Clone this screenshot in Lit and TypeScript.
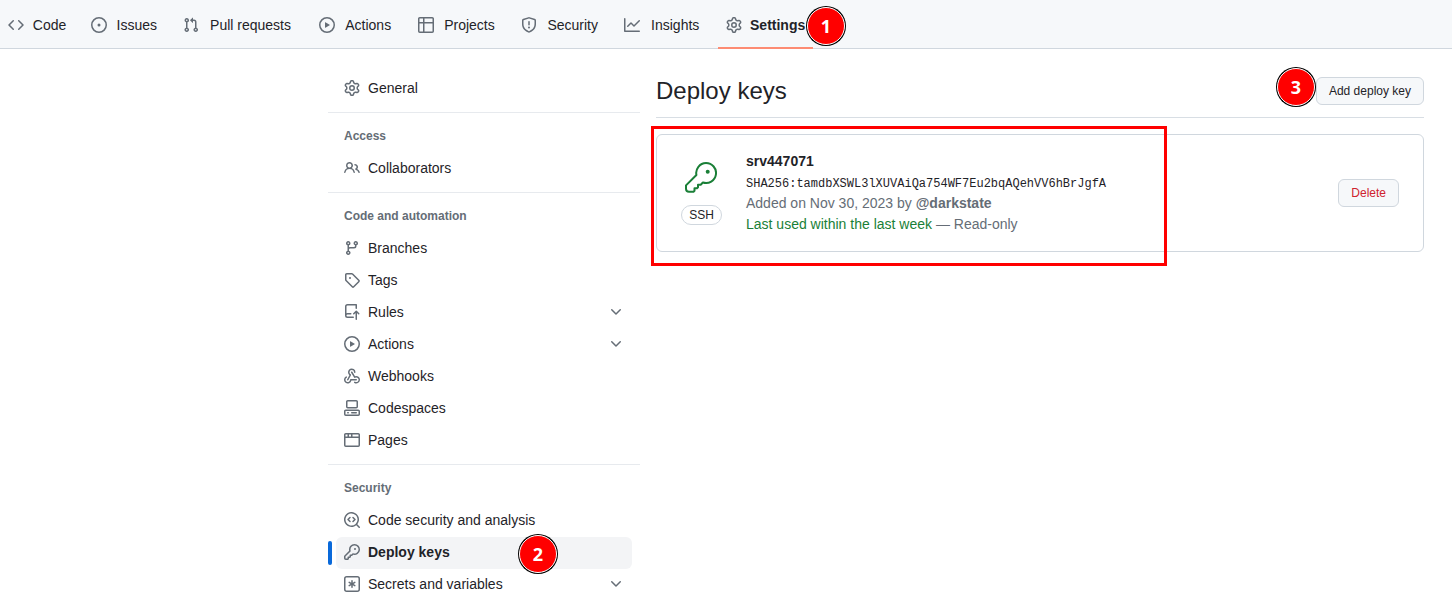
import { css, html, LitElement, nothing, svg } from "lit";
import { customElement } from "lit/decorators.js";

const icons: Record<string, string[]> = {
  code: ["m11.28 3.22 4.25 4.25a.75.75 0 0 1 0 1.06l-4.25 4.25a.749.749 0 0 1-1.275-.326.749.749 0 0 1 .215-.734L13.94 8l-3.72-3.72a.749.749 0 0 1 .326-1.275.749.749 0 0 1 .734.215Zm-6.56 0a.751.751 0 0 1 1.042.018.751.751 0 0 1 .018 1.042L2.06 8l3.72 3.72a.749.749 0 0 1-.326 1.275.749.749 0 0 1-.734-.215L.47 8.53a.75.75 0 0 1 0-1.06Z"],
  issue: ["M8 9.5a1.5 1.5 0 1 0 0-3 1.5 1.5 0 0 0 0 3Z", "M8 0a8 8 0 1 1 0 16A8 8 0 0 1 8 0ZM1.5 8a6.5 6.5 0 1 0 13 0 6.5 6.5 0 0 0-13 0Z"],
  pull: ["M1.5 3.25a2.25 2.25 0 1 1 3 2.122v5.256a2.251 2.251 0 1 1-1.5 0V5.372A2.25 2.25 0 0 1 1.5 3.25Zm5.677-.177L9.573.677A.25.25 0 0 1 10 .854V2.5h1A2.5 2.5 0 0 1 13.5 5v5.628a2.251 2.251 0 1 1-1.5 0V5a1 1 0 0 0-1-1h-1v1.646a.25.25 0 0 1-.427.177L7.177 3.427a.25.25 0 0 1 0-.354ZM3.75 2.5a.75.75 0 1 0 0 1.5.75.75 0 0 0 0-1.5Zm0 9.5a.75.75 0 1 0 0 1.5.75.75 0 0 0 0-1.5Zm8.25.75a.75.75 0 1 0 1.5 0 .75.75 0 0 0-1.5 0Z"],
  play: ["M8 0a8 8 0 1 1 0 16A8 8 0 0 1 8 0ZM1.5 8a6.5 6.5 0 1 0 13 0 6.5 6.5 0 0 0-13 0Zm4.879-2.773 4.264 2.559a.25.25 0 0 1 0 .428l-4.264 2.559A.25.25 0 0 1 6 10.559V5.442a.25.25 0 0 1 .379-.215Z"],
  table: ["M0 1.75C0 .784.784 0 1.75 0h12.5C15.216 0 16 .784 16 1.75v12.5A1.75 1.75 0 0 1 14.25 16H1.75A1.75 1.75 0 0 1 0 14.25ZM6.5 6.5v8h7.75a.25.25 0 0 0 .25-.25V6.5Zm8-1.5V1.75a.25.25 0 0 0-.25-.25H6.5V5Zm-13 1.5v7.75c0 .138.112.25.25.25H5v-8ZM5 5V1.5H1.75a.25.25 0 0 0-.25.25V5Z"],
  shield: ["M7.467.133a1.748 1.748 0 0 1 1.066 0l5.25 1.68A1.75 1.75 0 0 1 15 3.48V7c0 1.566-.32 3.182-1.303 4.682-.983 1.498-2.585 2.813-5.032 3.855a1.697 1.697 0 0 1-1.33 0c-2.447-1.042-4.049-2.357-5.032-3.855C1.32 10.182 1 8.566 1 7V3.48a1.75 1.75 0 0 1 1.217-1.667Zm.61 1.429a.25.25 0 0 0-.153 0l-5.25 1.68a.25.25 0 0 0-.174.238V7c0 1.358.275 2.666 1.057 3.86.784 1.194 2.121 2.34 4.366 3.297a.196.196 0 0 0 .154 0c2.245-.956 3.582-2.104 4.366-3.298C13.225 9.666 13.5 8.36 13.5 7V3.48a.251.251 0 0 0-.174-.237l-5.25-1.68ZM8.75 4.75v3a.75.75 0 0 1-1.5 0v-3a.75.75 0 0 1 1.5 0ZM9 10.5a1 1 0 1 1-2 0 1 1 0 0 1 2 0Z"],
  graph: ["M1.5 1.75V13.5h13.75a.75.75 0 0 1 0 1.5H.75a.75.75 0 0 1-.75-.75V1.75a.75.75 0 0 1 1.5 0Zm14.28 2.53-5.25 5.25a.75.75 0 0 1-1.06 0L7 7.06 4.28 9.78a.751.751 0 0 1-1.042-.018.751.751 0 0 1-.018-1.042l3.25-3.25a.75.75 0 0 1 1.06 0L10 7.94l4.72-4.72a.751.751 0 0 1 1.042.018.751.751 0 0 1 .018 1.042Z"],
  gear: ["M8 0a8.2 8.2 0 0 1 .701.031C9.444.095 9.99.645 10.16 1.29l.288 1.107c.018.066.079.158.212.224.231.114.454.243.668.386.123.082.233.09.299.071l1.103-.303c.644-.176 1.392.021 1.82.63.27.385.506.792.704 1.218.315.675.111 1.422-.364 1.891l-.814.806c-.049.048-.098.147-.088.294.016.257.016.515 0 .772-.01.147.038.246.088.294l.814.806c.475.469.679 1.216.364 1.891a7.977 7.977 0 0 1-.704 1.217c-.428.61-1.176.807-1.82.63l-1.102-.302c-.067-.019-.177-.011-.3.071a5.909 5.909 0 0 1-.668.386c-.133.066-.194.158-.211.224l-.29 1.106c-.168.646-.715 1.196-1.458 1.26a8.006 8.006 0 0 1-1.402 0c-.743-.064-1.289-.614-1.458-1.26l-.289-1.106c-.018-.066-.079-.158-.212-.224a5.738 5.738 0 0 1-.668-.386c-.123-.082-.233-.09-.299-.071l-1.103.303c-.644.176-1.392-.021-1.82-.63a8.12 8.12 0 0 1-.704-1.218c-.315-.675-.111-1.422.363-1.891l.815-.806c.05-.048.098-.147.088-.294a6.214 6.214 0 0 1 0-.772c.01-.147-.038-.246-.088-.294l-.815-.806C.635 6.045.431 5.298.746 4.623a7.92 7.92 0 0 1 .704-1.217c.428-.61 1.176-.807 1.82-.63l1.102.302c.067.019.177.011.3-.071.214-.143.437-.272.668-.386.133-.066.194-.158.211-.224l.29-1.106C6.009.645 6.556.095 7.299.03 7.53.01 7.764 0 8 0Zm-.571 1.525c-.036.003-.108.036-.137.146l-.289 1.105c-.147.561-.549.967-.998 1.189-.173.086-.34.183-.5.29-.417.278-.97.423-1.529.27l-1.103-.303c-.109-.03-.175.016-.195.045-.22.312-.412.644-.573.99-.014.031-.021.11.059.19l.815.806c.411.406.562.957.53 1.456a4.709 4.709 0 0 0 0 .582c.032.499-.119 1.05-.53 1.456l-.815.806c-.081.08-.073.159-.059.19.162.346.353.677.573.989.02.03.085.076.195.046l1.102-.303c.56-.153 1.113-.008 1.53.27.161.107.328.204.501.29.447.222.85.629.997 1.189l.289 1.105c.029.109.101.143.137.146a6.6 6.6 0 0 0 1.142 0c.036-.003.108-.036.137-.146l.289-1.105c.147-.561.549-.967.998-1.189.173-.086.34-.183.5-.29.417-.278.97-.423 1.529-.27l1.103.303c.109.029.175-.016.195-.045.22-.313.411-.644.573-.99.014-.031.021-.11-.059-.19l-.815-.806c-.411-.406-.562-.957-.53-1.456a4.709 4.709 0 0 0 0-.582c-.032-.499.119-1.05.53-1.456l.815-.806c.081-.08.073-.159.059-.19a6.464 6.464 0 0 0-.573-.989c-.02-.03-.085-.076-.195-.046l-1.102.303c-.56.153-1.113.008-1.53-.27a4.44 4.44 0 0 0-.501-.29c-.447-.222-.85-.629-.997-1.189l-.289-1.105c-.029-.11-.101-.143-.137-.146a6.6 6.6 0 0 0-1.142 0ZM11 8a3 3 0 1 1-6 0 3 3 0 0 1 6 0ZM9.5 8a1.5 1.5 0 1 0-3.001.001A1.5 1.5 0 0 0 9.5 8Z"],
  people: ["M2 5.5a3.5 3.5 0 1 1 5.898 2.549 5.508 5.508 0 0 1 3.034 4.084.75.75 0 1 1-1.482.235 4 4 0 0 0-7.9 0 .75.75 0 0 1-1.482-.236A5.507 5.507 0 0 1 3.102 8.05 3.493 3.493 0 0 1 2 5.5ZM11 4a3.001 3.001 0 0 1 2.22 5.018 5.01 5.01 0 0 1 2.56 3.012.749.749 0 0 1-.885.954.752.752 0 0 1-.549-.514 3.507 3.507 0 0 0-2.522-2.372.75.75 0 0 1-.574-.73v-.352a.75.75 0 0 1 .416-.672A1.5 1.5 0 0 0 11 5.5.75.75 0 0 1 11 4Zm-5.5-.5a2 2 0 1 0-.001 3.999A2 2 0 0 0 5.5 3.5Z"],
  branch: ["M9.5 3.25a2.25 2.25 0 1 1 3 2.122V6A2.5 2.5 0 0 1 10 8.5H6a1 1 0 0 0-1 1v1.128a2.251 2.251 0 1 1-1.5 0V5.372a2.25 2.25 0 1 1 1.5 0v1.836A2.493 2.493 0 0 1 6 7h4a1 1 0 0 0 1-1v-.628A2.25 2.25 0 0 1 9.5 3.25Zm-6 0a.75.75 0 1 0 1.5 0 .75.75 0 0 0-1.5 0Zm8.25-.75a.75.75 0 1 0 0 1.5.75.75 0 0 0 0-1.5ZM4.25 12a.75.75 0 1 0 0 1.5.75.75 0 0 0 0-1.5Z"],
  tag: ["M1 7.775V2.75C1 1.784 1.784 1 2.75 1h5.025c.464 0 .91.184 1.238.513l6.25 6.25a1.75 1.75 0 0 1 0 2.474l-5.026 5.026a1.75 1.75 0 0 1-2.474 0l-6.25-6.25A1.752 1.752 0 0 1 1 7.775Zm1.5 0c0 .066.026.13.073.177l6.25 6.25a.25.25 0 0 0 .354 0l5.025-5.025a.25.25 0 0 0 0-.354l-6.25-6.25a.25.25 0 0 0-.177-.073H2.75a.25.25 0 0 0-.25.25ZM6 5a1 1 0 1 1 0 2 1 1 0 0 1 0-2Z"],
  rules: ["M1 2.5A2.5 2.5 0 0 1 3.5 0h8.75a.75.75 0 0 1 .75.75v3.5a.75.75 0 0 1-1.5 0V1.5h-8a1 1 0 0 0-1 1v6.708A2.493 2.493 0 0 1 3.5 9h3.25a.75.75 0 0 1 0 1.5H3.5a1 1 0 0 0 0 2h5.75a.75.75 0 0 1 0 1.5H3.5A2.5 2.5 0 0 1 1 11.5Zm13.23 7.79h-.001l-1.224-1.224v6.184a.75.75 0 0 1-1.5 0V9.066L10.28 10.29a.75.75 0 0 1-1.06-1.061l2.505-2.504a.75.75 0 0 1 1.06 0L15.29 9.23a.751.751 0 0 1-.018 1.042.751.751 0 0 1-1.042.018Z"],
  webhook: [
    "M5.5 4.25a2.25 2.25 0 0 1 4.5 0 .75.75 0 0 0 1.5 0 3.75 3.75 0 1 0-6.14 2.889l-2.272 4.258a.75.75 0 0 0 1.324.706L7 7.25a.75.75 0 0 0-.309-1.015A2.25 2.25 0 0 1 5.5 4.25Z",
    "M7.364 3.607a.75.75 0 0 1 1.03.257l2.608 4.349a3.75 3.75 0 1 1-.628 6.785.75.75 0 0 1 .752-1.299 2.25 2.25 0 1 0-.033-3.88.75.75 0 0 1-1.03-.256L7.107 4.636a.75.75 0 0 1 .257-1.03Z",
    "M2.9 8.776A.75.75 0 0 1 2.625 9.8 2.25 2.25 0 1 0 6 11.75a.75.75 0 0 1 .75-.751h5.5a.75.75 0 0 1 0 1.5H7.425a3.751 3.751 0 1 1-5.55-3.998.75.75 0 0 1 1.024.274Z",
  ],
  codespaces: [
    "M0 11.25c0-.966.784-1.75 1.75-1.75h12.5c.966 0 1.75.784 1.75 1.75v3A1.75 1.75 0 0 1 14.25 16H1.75A1.75 1.75 0 0 1 0 14.25Zm2-9.5C2 .784 2.784 0 3.75 0h8.5C13.216 0 14 .784 14 1.75v5a1.75 1.75 0 0 1-1.75 1.75h-8.5A1.75 1.75 0 0 1 2 6.75Zm1.75-.25a.25.25 0 0 0-.25.25v5c0 .138.112.25.25.25h8.5a.25.25 0 0 0 .25-.25v-5a.25.25 0 0 0-.25-.25Zm-2 9.5a.25.25 0 0 0-.25.25v3c0 .138.112.25.25.25h12.5a.25.25 0 0 0 .25-.25v-3a.25.25 0 0 0-.25-.25Z",
    "M7 12.75a.75.75 0 0 1 .75-.75h4.5a.75.75 0 0 1 0 1.5h-4.5a.75.75 0 0 1-.75-.75Zm-4 0a.75.75 0 0 1 .75-.75h.5a.75.75 0 0 1 0 1.5h-.5a.75.75 0 0 1-.75-.75Z",
  ],
  browser: ["M0 2.75C0 1.784.784 1 1.75 1h12.5c.966 0 1.75.784 1.75 1.75v10.5A1.75 1.75 0 0 1 14.25 15H1.75A1.75 1.75 0 0 1 0 13.25ZM14.5 6h-13v7.25c0 .138.112.25.25.25h12.5a.25.25 0 0 0 .25-.25Zm-6-3.5v2h6V2.75a.25.25 0 0 0-.25-.25ZM5 2.5v2h2v-2Zm-3.25 0a.25.25 0 0 0-.25.25V4.5h2v-2Z"],
  codescan: [
    "M8.47 4.97a.75.75 0 0 0 0 1.06L9.94 7.5 8.47 8.97a.75.75 0 1 0 1.06 1.06l2-2a.75.75 0 0 0 0-1.06l-2-2a.75.75 0 0 0-1.06 0ZM6.53 6.03a.75.75 0 0 0-1.06-1.06l-2 2a.75.75 0 0 0 0 1.06l2 2a.75.75 0 1 0 1.06-1.06L5.06 7.5l1.47-1.47Z",
    "M12.246 13.307a7.501 7.501 0 1 1 1.06-1.06l2.474 2.473a.749.749 0 0 1-.326 1.275.749.749 0 0 1-.734-.215ZM1.5 7.5a6.002 6.002 0 0 0 3.608 5.504 6.002 6.002 0 0 0 6.486-1.117.75.75 0 0 1 .292-.293A6 6 0 1 0 1.5 7.5Z",
  ],
  key: ["M10.5 0a5.499 5.499 0 1 1-1.288 10.848l-.932.932a.749.749 0 0 1-.53.22H7v.75a.749.749 0 0 1-.22.53l-.5.5a.749.749 0 0 1-.53.22H5v.75a.749.749 0 0 1-.22.53l-.5.5a.749.749 0 0 1-.53.22h-2A1.75 1.75 0 0 1 0 14.25v-2c0-.199.079-.389.22-.53l4.932-4.932A5.5 5.5 0 0 1 10.5 0Zm-4 5.5c-.001.431.069.86.205 1.269a.75.75 0 0 1-.181.768L1.5 12.56v1.69c0 .138.112.25.25.25h1.69l.06-.06v-1.19a.75.75 0 0 1 .75-.75h1.19l.06-.06v-1.19a.75.75 0 0 1 .75-.75h1.19l1.023-1.025a.75.75 0 0 1 .768-.18A4 4 0 1 0 6.5 5.5ZM11 6a1 1 0 1 1 0-2 1 1 0 0 1 0 2Z"],
  asterisk: [
    "M0 2.75A2.75 2.75 0 0 1 2.75 0h10.5A2.75 2.75 0 0 1 16 2.75v10.5A2.75 2.75 0 0 1 13.25 16H2.75A2.75 2.75 0 0 1 0 13.25ZM2.75 1.5c-.69 0-1.25.56-1.25 1.25v10.5c0 .69.56 1.25 1.25 1.25h10.5c.69 0 1.25-.56 1.25-1.25V2.75c0-.69-.56-1.25-1.25-1.25Z",
    "M8 4a.75.75 0 0 1 .75.75V6.7l1.69-.975a.75.75 0 0 1 .75 1.3L9.5 8l1.69.976a.75.75 0 0 1-.75 1.298L8.75 9.3v1.951a.75.75 0 0 1-1.5 0V9.299l-1.69.976a.75.75 0 0 1-.75-1.3L6.5 8l-1.69-.975a.75.75 0 0 1 .75-1.3l1.69.976V4.75A.75.75 0 0 1 8 4Z",
  ],
  chevron: ["M12.78 5.22a.749.749 0 0 1 0 1.06l-4.25 4.25a.75.75 0 0 1-1.06 0L3.22 6.28a.749.749 0 1 1 1.06-1.06L8 8.939l3.72-3.719a.749.749 0 0 1 1.06 0Z"],
};

const icon = (name: string) => html`
  <svg class="icon" viewBox="0 0 16 16" width="16" height="16" fill="currentColor">
    ${icons[name].map((d) => svg`<path d=${d}></path>`)}
  </svg>
`;

const tabs = [
  { icon: "code", label: "Code" },
  { icon: "issue", label: "Issues" },
  { icon: "pull", label: "Pull requests" },
  { icon: "play", label: "Actions" },
  { icon: "table", label: "Projects" },
  { icon: "shield", label: "Security" },
  { icon: "graph", label: "Insights" },
  { icon: "gear", label: "Settings", active: true },
];

type NavItem = { icon: string; label: string; chevron?: boolean; active?: boolean };
type NavGroup = { heading?: string; items: NavItem[] };

const groups: NavGroup[] = [
  { items: [{ icon: "gear", label: "General" }] },
  { heading: "Access", items: [{ icon: "people", label: "Collaborators" }] },
  {
    heading: "Code and automation",
    items: [
      { icon: "branch", label: "Branches" },
      { icon: "tag", label: "Tags" },
      { icon: "rules", label: "Rules", chevron: true },
      { icon: "play", label: "Actions", chevron: true },
      { icon: "webhook", label: "Webhooks" },
      { icon: "codespaces", label: "Codespaces" },
      { icon: "browser", label: "Pages" },
    ],
  },
  {
    heading: "Security",
    items: [
      { icon: "codescan", label: "Code security and analysis" },
      { icon: "key", label: "Deploy keys", active: true },
      { icon: "asterisk", label: "Secrets and variables", chevron: true },
    ],
  },
];

// numbered callouts painted over the screenshot
const callouts = [
  { n: 1, x: 826, y: 26 },
  { n: 2, x: 538, y: 554 },
  { n: 3, x: 1296, y: 87 },
];

@customElement("app-root")
export class AppRoot extends LitElement {
  static override styles = css`
    :host {
      display: block;
      position: relative;
      height: 605px;
      overflow: hidden;
      background: #ffffff;
      color: #1f2328;
      font-family: "Liberation Sans", Arial, sans-serif;
      font-size: 14px;
      line-height: 21px;
    }

    .icon {
      display: block;
      flex: none;
      color: #656d76;
    }

    .tabs {
      display: flex;
      gap: 8px;
      height: 48px;
      background: #f6f8fa;
      border-bottom: 1px solid #d0d7de;
    }

    .tab {
      position: relative;
      display: flex;
      align-items: center;
      gap: 8px;
      height: 48px;
      padding: 2px 8px 0;
      box-sizing: border-box;
      white-space: nowrap;
    }

    /* the tab keeps the width of its bold label, active or not */
    .tab-label {
      display: block;
      text-align: center;
    }

    .tab-label::before {
      content: attr(data-content);
      display: block;
      height: 0;
      font-weight: 700;
      visibility: hidden;
    }

    .tab.active {
      font-weight: 700;
    }

    .tab.active::after {
      content: "";
      position: absolute;
      left: 0;
      right: 0;
      bottom: -1px;
      height: 2px;
      background: #fd8c73;
    }

    .layout {
      display: flex;
      gap: 16px;
      padding: 23px 0 0 328px;
    }

    .sidebar {
      width: 312px;
      flex: none;
    }

    .group + .group {
      margin-top: 8px;
      padding-top: 7px;
      border-top: 1px solid #e7eaee;
    }

    .heading {
      height: 32px;
      box-sizing: border-box;
      padding: 1px 0 0 16px;
      display: flex;
      align-items: center;
      font-size: 12px;
      font-weight: 700;
      color: #656d76;
    }

    .item {
      position: relative;
      z-index: 0;
      display: flex;
      align-items: center;
      gap: 8px;
      height: 32px;
      margin: 0 8px;
      padding: 0 8px;
    }

    .item .label {
      flex: 1;
    }

    .item.active {
      font-weight: 700;
    }

    /* highlight sits a pixel below the row's text box */
    .item.active::after {
      content: "";
      position: absolute;
      inset: 1px 0 -1px;
      z-index: -1;
      border-radius: 6px;
      background: #f3f4f6;
    }

    .item.active::before {
      content: "";
      position: absolute;
      left: -8px;
      top: 5px;
      width: 4px;
      height: 24px;
      border-radius: 6px;
      background: #0969da;
    }

    .main {
      width: 768px;
      flex: none;
    }

    .title-row {
      display: flex;
      align-items: flex-start;
      justify-content: space-between;
      height: 46px;
      border-bottom: 1px solid #d8dee4;
      box-sizing: border-box;
    }

    h2 {
      margin: 1px 0 0;
      font-size: 24px;
      font-weight: 400;
      line-height: 36px;
    }

    .btn {
      display: flex;
      align-items: center;
      height: 28px;
      box-sizing: border-box;
      padding: 0 12px;
      font-size: 12px;
      background: #f6f8fa;
      border: 1px solid #d0d7de;
      border-radius: 6px;
    }

    .title-row .btn {
      margin-top: 5px;
    }

    .btn.danger {
      color: #cf222e;
    }

    .card {
      display: flex;
      align-items: center;
      height: 118px;
      box-sizing: border-box;
      margin-top: 16px;
      padding: 0 24px;
      border: 1px solid #d0d7de;
      border-radius: 6px;
    }

    .key-type {
      display: flex;
      flex-direction: column;
      align-items: center;
      gap: 11px;
      width: 41px;
      margin: 1px 24px 0 0;
      flex: none;
    }

    .key-type svg {
      display: block;
      margin-left: -1px;
    }

    .pill {
      display: block;
      width: 41px;
      height: 20px;
      box-sizing: border-box;
      text-align: center;
      font-size: 12px;
      line-height: 18px;
      border: 1px solid #d0d7de;
      border-radius: 10px;
    }

    .details {
      flex: 1;
    }

    .name {
      font-weight: 700;
    }

    .fingerprint {
      font-family: "Liberation Mono", "Courier New", monospace;
      font-size: 12px;
      line-height: 20px;
      margin: 2px 0 -1px;
    }

    .muted {
      color: #656d76;
    }

    .used {
      color: #1a7f37;
    }

    .highlight {
      position: absolute;
      left: 651px;
      top: 126px;
      width: 516px;
      height: 140px;
      box-sizing: border-box;
      border: 3px solid #ff0000;
    }

    .callout {
      position: absolute;
      width: 38px;
      height: 38px;
      box-sizing: border-box;
      transform: translate(-19px, -19px);
      display: flex;
      align-items: center;
      justify-content: center;
      border-radius: 50%;
      background: #ff0000;
      border: 1px solid #ffffff;
      box-shadow: 0 0 0 1px #000000;
      color: #ffffff;
      font-family: "Open Sans", "Liberation Sans", sans-serif;
      font-size: 18px;
      font-weight: 700;
    }
  `;

  private renderItem(item: NavItem) {
    return html`
      <div class="item ${item.active ? "active" : ""}">
        ${icon(item.icon)}
        <span class="label">${item.label}</span>
        ${item.chevron ? icon("chevron") : nothing}
      </div>
    `;
  }

  override render() {
    return html`
      <nav class="tabs">
        ${tabs.map(
          (t) => html`
            <div class="tab ${t.active ? "active" : ""}">
              ${icon(t.icon)}<span class="tab-label" data-content=${t.label}>${t.label}</span>
            </div>
          `
        )}
      </nav>
      <div class="layout">
        <aside class="sidebar">
          ${groups.map(
            (g) => html`
              <div class="group">
                ${g.heading ? html`<div class="heading">${g.heading}</div>` : nothing}
                ${g.items.map((item) => this.renderItem(item))}
              </div>
            `
          )}
        </aside>
        <main class="main">
          <div class="title-row">
            <h2>Deploy keys</h2>
            <div class="btn">Add deploy key</div>
          </div>
          <div class="card">
            <div class="key-type">
              <svg viewBox="0 0 32 32" width="32" height="32" fill="none" stroke="#1a7f37" stroke-width="2" stroke-linejoin="round">
                <path d="M21 1a10 10 0 1 1-3.1 19.5l-2.2 2.2H13v2.5l-1 1H9.5v2.5l-1 1H4a3 3 0 0 1-3-3v-3.3l10.4-10.4A10 10 0 0 1 21 1Z"></path>
                <circle cx="22.7" cy="9.7" r="2" fill="#1a7f37" stroke="none"></circle>
              </svg>
              <span class="pill">SSH</span>
            </div>
            <div class="details">
              <div class="name">srv447071</div>
              <div class="fingerprint">SHA256:tamdbXSWL3lXUVAiQa754WF7Eu2bqAQehVV6hBrJgfA</div>
              <div class="muted">Added on Nov 30, 2023 by <strong>@darkstate</strong></div>
              <div class="muted"><span class="used">Last used within the last week</span> — Read-only</div>
            </div>
            <div class="btn danger">Delete</div>
          </div>
        </main>
      </div>
      <div class="highlight"></div>
      ${callouts.map(
        (c) => html`<div class="callout" style="left:${c.x}px;top:${c.y}px">${c.n}</div>`
      )}
    `;
  }
}

declare global {
  interface HTMLElementTagNameMap {
    "app-root": AppRoot;
  }
}
